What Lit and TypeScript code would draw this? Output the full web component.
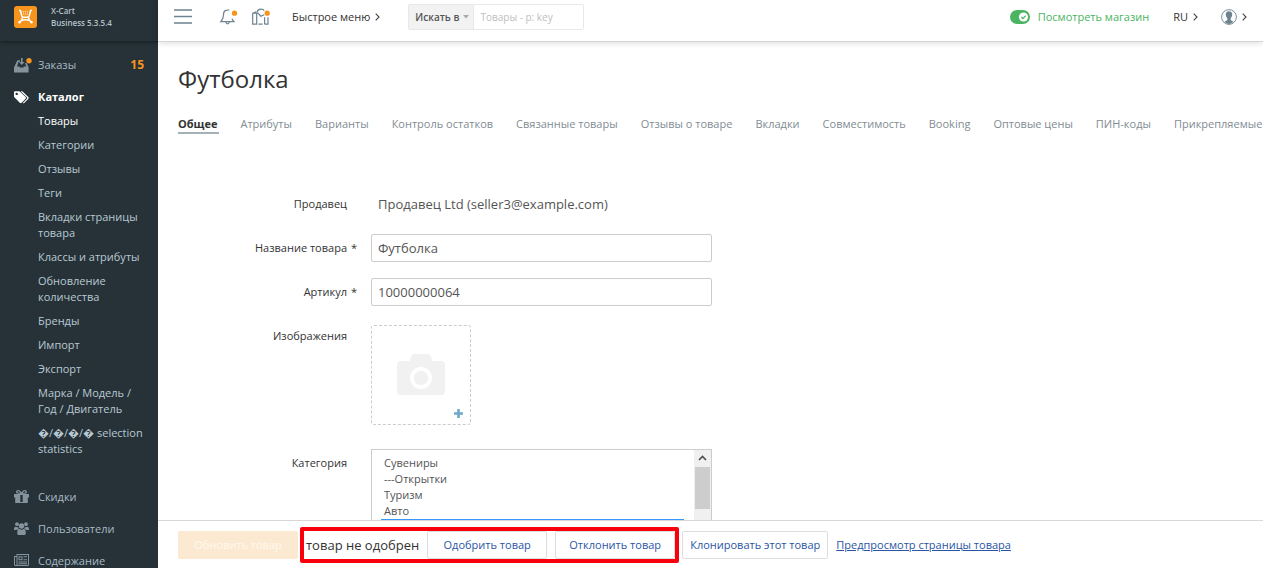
import { LitElement, html, css, svg } from "lit";
import { customElement, property } from "lit/decorators.js";
import { classMap } from "lit/directives/class-map.js";

const icons = {
  orders: svg`<path d="M3.4 2.2H6v1.6H4.6L3 8.4h2.6v1.2h4V8.4h2.6L11 5h1.6l2 4.2V14.4H0V9.4z"/><path d="M7 0h1.6v4h2L7.8 7 5 4h2z"/><circle class="dot" cx="15" cy="2.8" r="2.7"/>`,
  catalog: svg`<path fill-rule="evenodd" d="M0 2.4V6.2c0 .5.2 1 .6 1.4l5.2 5.2c.5.5 1.300.5 1.800 0l4-4c.5-.5.5-1.300 0-1.800L6.300 1.900C5.900 1.500 5.400 1.300 4.900 1.300H1.200C.5 1.300 0 1.800 0 2.400zM2.700 5.100a1.200 1.200 0 1 1 0-2.400 1.200 1.200 0 0 1 0 2.400z"/><path d="M6.500 1.300h1.200c.5 0 1 .2 1.400.6l5.200 5.200c.5.5.5 1.300 0 1.800l-4.100 4.200c-.5.4-1 .3-1.500-.2l4.300-4.200c.4-.4.4-.9 0-1.300z"/>`,
  gift: svg`<path fill-rule="evenodd" d="M0 4h6V3.700C3.300 4 2 3.300 2 2 2 .8 3 0 4.200 0 5.600 0 6.600 1.100 7.500 2.600 8.400 1.100 9.400 0 10.800 0 12 0 13 .8 13 2c0 1.300-1.300 2-4 1.700V4h6v3.400h-1.200V13H1.200V7.400H0zM4.300 1.200c-.6 0-1 .3-1 .8 0 .6.900.9 3 .8-.7-1-1.300-1.600-2-1.600zm6.400 0c-.7 0-1.300.6-2 1.600 2.100.1 3-.2 3-.8 0-.5-.4-.8-1-.8zM6.300 5v7h2.400V5z"/>`,
  users: svg`<circle cx="3" cy="2.200" r="1.900"/><circle cx="12" cy="2.200" r="1.900"/><circle cx="7.500" cy="4" r="2.700"/><path d="M0 7.500C0 5.700.6 4.700 1.700 4.700c.8.500 1.700.6 2.500.3C4.200 6 4.500 6.700 5 7.400H3.300L2.600 8H.8C.3 8 0 7.900 0 7.500zM15 7.500c0-1.800-.6-2.800-1.700-2.800-.8.500-1.700.6-2.500.3 0 1-.3 1.700-.8 2.400h1.700l.7.600h1.800c.5 0 .8-.1.800-.5zM3.200 11.200c0-2.400.6-4 2.200-4.100 1.300 1 2.900 1 4.200 0 1.600.1 2.200 1.700 2.200 4.100 0 1-.6 1.800-1.800 1.800H5c-1.200 0-1.800-.8-1.800-1.800z"/>`,
  content: svg`<path fill-rule="evenodd" d="M2.500 0H15v10.500c0 .8-.6 1.500-1.500 1.500h-12C.6 12 0 11.300 0 10.500V2h2.500zM1 3v7.400c0 .7 1.500.7 1.500 0V3zM3.500 1v10h9.800c.4 0 .7-.3.700-.6V1z"/><path fill-rule="evenodd" d="M4.500 2.300h4v4h-4zm1 1v2h2v-2z"/><path d="M9.500 2.300H13v1H9.500zM9.500 5.300H13v1H9.500zM4.500 7.500H13v1H4.500zM4.500 9.300H13v1H4.500z"/>`,
};

const chevron = html`<svg class="chev" width="5" height="8" viewBox="0 0 5 8" aria-hidden="true"><path d="M.7.7 4 4 .7 7.300" /></svg>`;

interface Section {
  label: string;
  icon: keyof typeof icons;
  count?: string;
  active?: boolean;
  items?: string[];
}

const SECTIONS: Section[] = [
  { label: "Заказы", icon: "orders", count: "15" },
  {
    label: "Каталог",
    icon: "catalog",
    active: true,
    items: [
      "Товары", "Категории", "Отзывы", "Теги", "Вкладки страницы товара",
      "Классы и атрибуты", "Обновление количества", "Бренды", "Импорт",
      "Экспорт", "Марка / Модель / Год / Двигатель",
      "\uFFFD/\uFFFD/\uFFFD/\uFFFD selection statistics",
    ],
  },
  { label: "Скидки", icon: "gift" },
  { label: "Пользователи", icon: "users" },
  { label: "Содержание", icon: "content" },
];

@customElement("side-nav")
export class SideNav extends LitElement {
  static styles = css`
    :host { display: block; background: #263238; overflow: hidden; min-height: 0; }
    .brand {
      display: flex; align-items: flex-start; gap: 14px; box-sizing: border-box; height: 41px;
      padding: 5px 14px 0; color: #b4c0c8; font-size: 8px; font-weight: 600; line-height: 12px;
      box-shadow: 0 1px 4px rgba(0, 0, 0, 0.45); text-decoration: none;
    }
    .logo { flex: none; }
    .nav { padding-top: 8px; }
    .section { display: grid; grid-template-columns: 24px 1fr auto; align-items: center; height: 32px; padding: 0 14px; color: #a9bac4; text-decoration: none; line-height: 16px; }
    .section.active { color: #fff; font-weight: 700; }
    .icon { fill: #84939c; overflow: visible; }
    .active .icon { fill: #fff; }
    .dot { fill: #f7941e; }
    .count { color: #f7941e; font-weight: 700; font-size: 12px; }
    .sub { list-style: none; margin: 0; padding: 0 14px 16px 38px; }
    .item { display: block; padding: 0 0 8px; line-height: 16px; color: #b9c9d3; text-decoration: none; }
    .item.current { color: #fff; }
  `;

  render() {
    return html`
      <a class="brand" href="#">
        <svg class="logo" width="23" height="24" viewBox="0 0 23 24" aria-hidden="true">
          <rect y="1" width="23" height="22" rx="3" fill="#f7941e" />
          <path d="M5 5.500h1.500l1.300 5.500q.4 1.300 1.700 1.300h4q1.300 0 1.700-1.300l1.300-5.500H18M8.600 12.300q-.5 3.200-3.600 5.200M14.400 12.300q.5 3.200 3.600 5.200M7.300 15.600q4.200-1.600 8.400 0" fill="none" stroke="#fff" stroke-width="1.500" />
          <circle cx="5.500" cy="17.300" r="1.200" fill="#fff" /><circle cx="17.500" cy="17.300" r="1.200" fill="#fff" />
          <path d="M8.900 6.800h5.400M9.200 9h4.800" stroke="#fff" stroke-width="1" stroke-dasharray="1 1" />
        </svg>
        <span>X-Cart<br />Business 5.3.5.4</span>
      </a>
      <nav class="nav">
        ${SECTIONS.map(
          (s) => html`
            <a class=${classMap({ section: true, active: !!s.active })} href="#">
              <svg class="icon" width="15" height="14" viewBox="0 0 15 14" aria-hidden="true">${icons[s.icon]}</svg>
              <span>${s.label}</span>
              ${s.count ? html`<span class="count">${s.count}</span>` : ""}
            </a>
            ${s.items
              ? html`<ul class="sub">
                  ${s.items.map((t, i) => html`<li><a class=${classMap({ item: true, current: i === 0 })} href="#">${t}</a></li>`)}
                </ul>`
              : ""}
          `
        )}
      </nav>
    `;
  }
}

@customElement("top-bar")
export class TopBar extends LitElement {
  static styles = css`
    :host {
      display: flex; align-items: center; box-sizing: border-box; height: 42px; padding: 0 16px 8px 16px;
      background: #fff; border-bottom: 1px solid #d5d8d9; box-shadow: 0 1px 6px rgba(0, 0, 0, 0.15);
      position: relative; z-index: 1; color: #333;
    }
    button { font: inherit; color: inherit; border: 0; background: none; padding: 0; display: flex; align-items: center; }
    .chev { fill: none; stroke: #444; stroke-width: 1.1; }
    .line { fill: none; stroke: #6d8390; stroke-width: 1.2; }
    .icon { overflow: visible; display: block; }
    .dot { fill: #f7941e; }
    .menu { margin-right: 28px; }
    .bell { margin-right: 15px; }
    .news { margin-right: 22px; }
    .quick { gap: 5px; margin-right: 28px; }
    .search { display: flex; box-sizing: border-box; width: 176px; height: 26px; border: 1px solid #e8e8e8; border-radius: 2px; }
    .scope { gap: 4px; padding: 0 4px 0 6px; background: #f2f2f2; border-right: 1px solid #e8e8e8; color: #555; font-size: 10px; font-weight: 600; white-space: nowrap; }
    .query { flex: 1; min-width: 0; box-sizing: border-box; border: 0; padding: 0 6px; font: inherit; font-size: 10px; outline: none; }
    .query::placeholder { color: #c0c0c0; opacity: 1; }
    .right { display: flex; align-items: center; margin-left: auto; }
    .view { display: flex; align-items: center; gap: 8px; color: #4bb461; text-decoration: none; margin-right: 24px; }
    .lang { gap: 5px; margin-right: 23px; }
    .user { gap: 5px; }
  `;

  render() {
    return html`
      <button class="menu" aria-label="Меню">
        <svg class="icon line" width="18" height="15" viewBox="0 0 18 15"><path d="M0 1h18M0 7.500h18M0 14h18" stroke-width="1.300" /></svg>
      </button>
      <button class="bell" aria-label="Уведомления">
        <svg class="icon" width="17" height="17" viewBox="0 0 17 17">
          <path class="line" d="M7.500 2.200C4.500 2.200 3.500 4.200 3.500 6.700c0 3.500-.5 4.500-2.700 7H14c-1-1.300-1.600-2-2-3M5.800 14.200c.5 2.200 3 2.200 3.500 0M7 2h2.300" />
          <circle class="dot" cx="14.500" cy="5.200" r="2.600" />
        </svg>
      </button>
      <button class="news" aria-label="Магазин">
        <svg class="icon" width="18" height="17" viewBox="0 0 18 17">
          <path class="line" d="M.7 16.200V5.200h4v11zM.7 5.200 4.200 3.700M5 4.200c.5-1.800 2-3 4-3 1.500 0 2.500.5 3.300 1.500M5.500 4.700l3.300 3.500L12.200 6.700M12.600 16.200V9.200M16 9.200v7h-3.400M6.500 16.200h4" />
          <circle class="dot" cx="15.200" cy="5.200" r="2.600" />
        </svg>
      </button>
      <button class="quick">Быстрое меню ${chevron}</button>
      <form class="search" @submit=${(e: Event) => e.preventDefault()}>
        <button class="scope" type="button">Искать в
          <svg width="6" height="4" viewBox="0 0 6 4" aria-hidden="true"><path d="M0 0h6L3 3.500z" fill="#aaa" /></svg>
        </button>
        <input class="query" type="text" aria-label="Поиск" placeholder="Товары - p: key" />
      </form>
      <div class="right">
        <a class="view" href="#">
          <svg width="20" height="14" viewBox="0 0 20 14" aria-hidden="true">
            <rect width="20" height="14" rx="7" fill="#4bb461" />
            <circle cx="13.500" cy="7" r="4.600" fill="#fff" />
            <path d="m11.300 7 1.700 1.600 2.700-3" fill="none" stroke="#4bb461" stroke-width="1.200" />
          </svg>
          Посмотреть магазин
        </a>
        <button class="lang">RU ${chevron}</button>
        <button class="user" aria-label="Профиль">
          <svg width="16" height="16" viewBox="0 0 16 16">
            <circle cx="8" cy="8" r="7.400" fill="#fff" stroke="#78909c" />
            <path d="M8 2.300c2.300 0 3.300 1.300 3.200 3.200-.1 1.800-.7 2.800-1.500 3.700v1.700c.9.800 2 1.100 2.800 1.700C11.300 14.300 9.700 15 8 15s-3.300-.7-4.500-2.400c.8-.6 1.900-.9 2.800-1.700V9.200c-.8-.9-1.400-1.900-1.500-3.700C4.700 3.600 5.700 2.300 8 2.300z" fill="#6d8390" />
          </svg>
          ${chevron}
        </button>
      </div>
    `;
  }
}

@customElement("product-form")
export class ProductForm extends LitElement {
  static styles = css`
    :host { display: block; }
    .row { display: grid; grid-template-columns: 169px 16px 341px; column-gap: 4px; margin-bottom: 16px; line-height: 28px; }
    .label { text-align: right; color: #333; line-height: 27px; }
    .star { color: #333; line-height: 27px; }
    .text { padding-left: 7px; font-size: 13px; color: #555; }
    .input { box-sizing: border-box; width: 100%; height: 28px; border: 1px solid #ccc; border-radius: 2px; padding: 0 6px; font: inherit; font-size: 13px; line-height: 20px; color: #555; outline: none; background: #fff; }
    .drop { box-sizing: border-box; display: grid; place-items: center; position: relative; width: 100px; height: 100px; margin: 3px 0 8px; padding: 0; background: #fff; border: 1px dashed #ccc; border-radius: 3px; }
    .plus { position: absolute; right: 7px; bottom: 6px; }
    .list { display: flex; box-sizing: border-box; height: 160px; border: 1px solid #ccc; }
    .select { flex: 1; min-width: 0; height: 100%; border: 0; border-radius: 0; padding: 5px 10px 5px 9px; font: inherit; color: #555; outline: none; overflow: hidden; background: #fff; }
    .option { padding: 0 3px; line-height: 16px; height: 16px; min-height: 16px; }
    .option:checked { background: #39f linear-gradient(#39f, #39f); color: #fff; }
    .bar { width: 17px; background: #f0f0f0; display: flex; flex-direction: column; align-items: center; }
    .arrow { display: block; padding: 5px 0 6px; }
    .thumb { width: 15px; height: 42px; background: #cdcdcd; }
  `;

  render() {
    const categories = ["Сувениры", "---Открытки", "Туризм", "Авто", "Одежда", "---Футболки"];
    return html`
      <div class="row"><span class="label">Продавец</span><span></span><span class="text">Продавец Ltd (seller3@example.com)</span></div>
      <div class="row">
        <label class="label" for="name">Название товара</label><span class="star">*</span>
        <input class="input" id="name" type="text" value="Футболка" />
      </div>
      <div class="row">
        <label class="label" for="sku">Артикул</label><span class="star">*</span>
        <input class="input" id="sku" type="text" value="10000000064" />
      </div>
      <div class="row">
        <span class="label">Изображения</span><span></span>
        <button class="drop" aria-label="Добавить изображение">
          <svg width="48" height="42" viewBox="0 0 48 42"><path fill="#f1f1f2" fill-rule="evenodd" d="M4 7h8.500L14.500 2Q15.300 0 17.500 0h13q2.200 0 3 2l2 5H44q4 0 4 4v26q0 4-4 4H4q-4 0-4-4V11q0-4 4-4zM24 13a11 11 0 1 0 0 22 11 11 0 0 0 0-22zm0 3.800a7.200 7.200 0 1 1 0 14.400 7.200 7.200 0 0 1 0-14.400z" /></svg>
          <svg class="plus" width="9" height="9" viewBox="0 0 9 9"><path d="M3.200 0h2.600v3.200H9v2.600H5.800V9H3.200V5.800H0V3.200h3.200z" fill="#6fa8c9" /></svg>
        </button>
      </div>
      <div class="row">
        <label class="label" for="cat">Категория</label><span></span>
        <div class="list">
          <select class="select" id="cat" multiple size="8">
            ${categories.map((c, i) => html`<option class="option" ?selected=${i === 4}>${c}</option>`)}
          </select>
          <div class="bar" aria-hidden="true">
            <svg class="arrow" width="9" height="6" viewBox="0 0 9 6"><path d="M1 5 4.500 1.500 8 5" fill="none" stroke="#505050" stroke-width="1.700" /></svg>
            <div class="thumb"></div>
          </div>
        </div>
      </div>
    `;
  }
}

@customElement("action-bar")
export class ActionBar extends LitElement {
  static styles = css`
    :host { display: flex; align-items: center; box-sizing: border-box; height: 48px; padding: 0 20px; background: #fff; border-top: 1px solid #d8d8d8; }
    .btn { box-sizing: border-box; height: 28px; padding: 0; min-width: 120px; border: 1px solid #ddd; border-radius: 2px; background: #fff; color: #2a55a5; font: inherit; white-space: nowrap; }
    .update { background: #fce9d2; border-color: #fce9d2; color: #fff8ee; margin-right: 2px; }
    .review { display: flex; align-items: center; gap: 8px; border: 4px solid #f8000c; border-radius: 2px; padding: 0 0 0 2px; color: #333; font-size: 13px; white-space: nowrap; }
    .review .btn { font-size: 11px; }
    .clone { padding: 0 7px; margin: 0 8px 0 3px; }
    .link { color: #2a55a5; white-space: nowrap; }
  `;

  render() {
    return html`
      <button class="btn update" disabled>Обновить товар</button>
      <div class="review">
        <span>товар не одобрен</span>
        <button class="btn">Одобрить товар</button>
        <button class="btn">Отклонить товар</button>
      </div>
      <button class="btn clone">Клонировать этот товар</button>
      <a class="link" href="#">Предпросмотр страницы товара</a>
    `;
  }
}

@customElement("app-root")
export class AppRoot extends LitElement {
  @property({ attribute: false }) tabs = [
    "Общее", "Атрибуты", "Варианты", "Контроль остатков", "Связанные товары",
    "Отзывы о товаре", "Вкладки", "Совместимость", "Booking", "Оптовые цены",
    "ПИН-коды", "Прикрепляемые файлы",
  ];

  static styles = css`
    :host { display: grid; grid-template-columns: 158px minmax(0, 1fr); grid-template-rows: minmax(0, 1fr); height: 100vh; font-family: "Open Sans", "Noto Sans", sans-serif; font-size: 11px; color: #333; background: #fff; }
    .main { display: flex; flex-direction: column; min-width: 0; min-height: 0; }
    .body { flex: 1; min-height: 0; overflow: hidden; padding: 21px 0 0 20px; }
    .title { margin: 0 0 20px; font-size: 24px; font-weight: 400; line-height: 32px; color: #333; }
    .tabs { display: flex; gap: 21px; margin-bottom: 56px; white-space: nowrap; }
    .tab { padding-right: 2px; line-height: 17px; color: #7f8c93; text-decoration: none; border-bottom: 2px solid transparent; }
    .tab.current { color: #333; font-weight: 700; border-color: #a5b1b7; }
  `;

  render() {
    return html`
      <side-nav></side-nav>
      <div class="main">
        <top-bar></top-bar>
        <div class="body">
          <h1 class="title">Футболка</h1>
          <nav class="tabs">
            ${this.tabs.map((t, i) => html`<a class=${classMap({ tab: true, current: i === 0 })} href="#">${t}</a>`)}
          </nav>
          <product-form></product-form>
        </div>
        <action-bar></action-bar>
      </div>
    `;
  }
}
